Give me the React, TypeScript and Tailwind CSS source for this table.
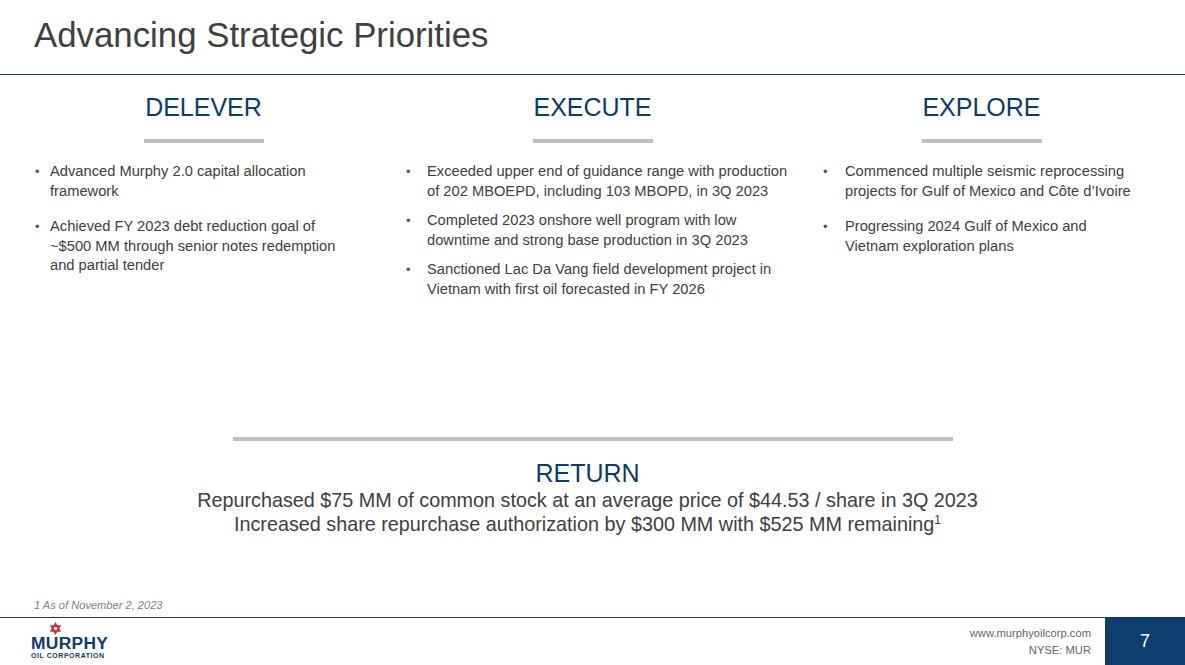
import React from "react";

const NAVY = "text-[#0d3b6b]";

type Col = {
  title: string;
  pl: string;
  bw: string;
  gap: string;
  items: string[][];
};

const cols: Col[] = [
  {
    title: "DELEVER",
    pl: "pl-[26px]",
    bw: "w-[15px]",
    gap: "gap-[16px]",
    items: [
      ["Advanced Murphy 2.0 capital allocation", "framework"],
      [
        "Achieved FY 2023 debt reduction goal of",
        "~$500 MM through senior notes redemption",
        "and partial tender",
      ],
    ],
  },
  {
    title: "EXECUTE",
    pl: "pl-[8px]",
    bw: "w-[21px]",
    gap: "gap-[10px]",
    items: [
      [
        "Exceeded upper end of guidance range with production",
        "of 202 MBOEPD, including 103 MBOPD, in 3Q 2023",
      ],
      [
        "Completed 2023 onshore well program with low",
        "downtime and strong base production in 3Q 2023",
      ],
      [
        "Sanctioned Lac Da Vang field development project in",
        "Vietnam with first oil forecasted in FY 2026",
      ],
    ],
  },
  {
    title: "EXPLORE",
    pl: "pl-[36px]",
    bw: "w-[22px]",
    gap: "gap-[16px]",
    items: [
      [
        "Commenced multiple seismic reprocessing",
        "projects for Gulf of Mexico and Côte d\u2019Ivoire",
      ],
      ["Progressing 2024 Gulf of Mexico and", "Vietnam exploration plans"],
    ],
  },
];

function Star() {
  return (
    <svg width="13" height="13" viewBox="0 0 12 12">
      <polygon points="6,0 11.2,9 0.8,9" fill="#d52b2f" />
      <polygon points="6,12 11.2,3 0.8,3" fill="#d52b2f" />
      <circle cx="6" cy="6" r="1.6" fill="#ffffff" />
    </svg>
  );
}

export default function App() {
  return (
    <div
      className="w-[1185px] h-[665px] bg-white flex flex-col overflow-hidden text-[#404040]"
      style={{ fontFamily: '"Liberation Sans", Arial, sans-serif' }}
    >
      {/* Header */}
      <div className="h-[74px] pl-[34px] pt-[15px]">
        <h1 className="text-[34.8px] leading-[40px] text-[#404040]">
          Advancing Strategic Priorities
        </h1>
      </div>
      <div className="h-px bg-[#1b3d60]" />

      {/* Columns */}
      <div className="h-[362px] pl-[9px] grid grid-cols-[389px_389px_389px]">
        {cols.map((c) => (
          <div key={c.title} className="flex flex-col">
            <div className={`mt-[17px] text-[25px] leading-[30px] text-center ${NAVY}`}>
              {c.title}
            </div>
            <div className="mt-[17px] mx-auto w-[120px] h-[4px] bg-[#bfbfbf]" />
            <ul className={`mt-[19px] flex flex-col ${c.gap} ${c.pl}`}>
              {c.items.map((lines, i) => (
                <li key={i} className="flex text-[14.7px] leading-[19.5px]">
                  <span className={`${c.bw} shrink-0 text-[13px] text-[#595959]`}>•</span>
                  <span className="flex flex-col">
                    {lines.map((l, j) => (
                      <span key={j} className="whitespace-nowrap">
                        {l}
                      </span>
                    ))}
                  </span>
                </li>
              ))}
            </ul>
          </div>
        ))}
      </div>

      {/* Return */}
      <div className="flex flex-col items-center">
        <div className="w-[720px] h-[4px] bg-[#bfbfbf]" />
        <div className={`mt-[18px] text-[25px] leading-[29px] ${NAVY} -translate-x-[5px]`}>
          RETURN
        </div>
        <div className="text-[19.8px] leading-[24px] text-center -translate-x-[5px]">
          <div className="whitespace-nowrap">
            Repurchased $75 MM of common stock at an average price of $44.53 / share in 3Q 2023
          </div>
          <div className="whitespace-nowrap">
            Increased share repurchase authorization by $300 MM with $525 MM remaining
            <sup className="text-[12px] relative -top-[7px] align-baseline">1</sup>
          </div>
        </div>
      </div>

      <div className="flex-1" />

      {/* Footnote */}
      <div className="pl-[34px] mb-[5px] text-[11.1px] leading-[14px] italic text-[#7f7f7f]">
        1 As of November 2, 2023
      </div>

      {/* Footer */}
      <div className="h-[48px] border-t border-[#1b3d60] flex">
        <div className="pl-[31px] pt-[4px] flex flex-col items-start">
          <div className="pl-[18px] h-[14px] flex items-start">
            <Star />
          </div>
          <div className="text-[17.4px] leading-[15px] font-bold tracking-[0.3px] text-[#15396b]">
            MURPHY
          </div>
          <div className="text-[7px] leading-[9px] font-bold tracking-[0.55px] text-[#15396b]">
            OIL CORPORATION
          </div>
        </div>
        <div className="flex-1" />
        <div className="pr-[14px] pt-[7px] flex flex-col items-end text-[11.2px] leading-[17px] text-[#666666]">
          <div>www.murphyoilcorp.com</div>
          <div>NYSE: MUR</div>
        </div>
        <div className="w-[80px] -mt-px h-[48px] bg-[#0e3d70] flex items-center justify-center text-white text-[18px]">
          7
        </div>
      </div>
    </div>
  );
}
